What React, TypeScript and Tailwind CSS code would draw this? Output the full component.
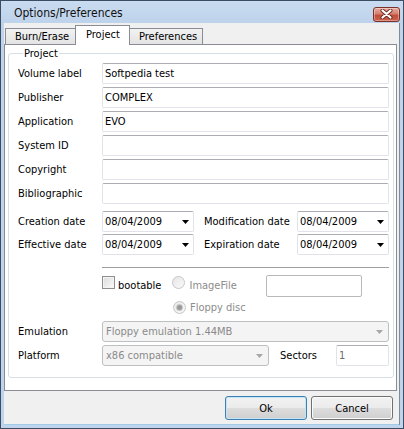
import type { ReactNode } from "react";

const FONT = "font-['Tahoma','DejaVu_Sans_Condensed','DejaVu_Sans',sans-serif]";

function TextBox({ value = "", w = "w-[287px]", disabled = false }: { value?: string; w?: string; disabled?: boolean }) {
  return (
    <div className={`${w} flex h-[21px] items-center rounded-[2px] border border-[#e2e3ea] border-t-[#abadb3] bg-white pl-[2px] ${disabled ? "text-[#6d6d6d]" : "text-black"}`}>
      {value}
    </div>
  );
}

function Arrow({ color }: { color: string }) {
  return (
    <svg width="7" height="4" viewBox="0 0 7 4" className="flex-none">
      <path d="M0 0h7L3.5 4z" fill={color} />
    </svg>
  );
}

function DateBox({ value }: { value: string }) {
  return (
    <div className="flex h-[21px] w-[92px] items-center justify-between rounded-[2px] border border-[#e2e3ea] border-t-[#abadb3] bg-white pl-[2px] pr-[4px]">
      <span>{value}</span>
      <Arrow color="#000" />
    </div>
  );
}

function DisabledCombo({ value, w }: { value: string; w: string }) {
  return (
    <div className={`${w} flex h-[21px] items-center justify-between rounded-[3px] border border-[#bcc0c3] bg-[#f4f4f4] pl-[3px] pr-[5px] text-[#8a8a8a]`}>
      <span>{value}</span>
      <Arrow color="#a7a7a7" />
    </div>
  );
}

function Row({ label, children, className = "" }: { label: string; children: ReactNode; className?: string }) {
  return (
    <div className={`flex items-center ${className}`}>
      <span className="w-[84px] flex-none">{label}</span>
      {children}
    </div>
  );
}

function Radio({ checked }: { checked?: boolean }) {
  return (
    <span className="grid h-[13px] w-[13px] flex-none place-items-center rounded-full border border-[#c6c6c6] bg-gradient-to-br from-[#e6e6e6] to-[#fafafa]">
      {checked && <span className="h-[5px] w-[5px] rounded-full bg-[#9a9a9a] shadow-[0_0_0_1px_#c9c9c9]" />}
    </span>
  );
}

function Tab({ label, active, className = "" }: { label: string; active?: boolean; className?: string }) {
  return (
    <div
      className={`flex items-center border border-b-0 border-[#898c95] ${
        active ? "relative z-10 -mb-px h-[20px] bg-white" : "h-[16px] bg-gradient-to-b from-[#f2f2f2] to-[#e3e3e3]"
      } ${className}`}
    >
      {label}
    </div>
  );
}

function Button({ label, focused }: { label: string; focused?: boolean }) {
  return (
    <button
      type="button"
      className={`relative h-[24px] w-[82px] overflow-hidden rounded-[3px] border ${
        focused ? "border-[#3c7fb1] shadow-[inset_0_0_0_1px_#c2e5f8]" : "border-[#707070] shadow-[inset_0_0_0_1px_#fbfbfb]"
      } bg-[linear-gradient(#f2f2f2_0%,#ebebeb_50%,#dddddd_50%,#cfcfcf_100%)] text-black`}
    >
      {label}
    </button>
  );
}

export default function App() {
  return (
    <div className={`flex h-[429px] w-[404px] flex-col border border-[#3d4d61] bg-[#bfd4ec] text-[11px] leading-none text-black ${FONT}`}>
      <div className="flex h-[22px] flex-none items-center bg-gradient-to-b from-[#c9dbf0] to-[#bdd3eb] pl-[13px] pr-[3px]">
        <span className="pt-[2px] text-[12px] text-[#111]">Options/Preferences</span>
        <div className="ml-auto mt-[4px] grid h-[15px] w-[27px] place-items-center rounded-[3px] border border-[#7b3128] bg-[linear-gradient(#e8aa9c_0%,#d6806f_45%,#c24f3c_55%,#c9604b_100%)] shadow-[inset_0_0_0_1px_rgba(255,255,255,0.35)]">
          <svg width="13" height="10" viewBox="0 0 13 10">
            <path d="M2.5 1.5l8 7M10.5 1.5l-8 7" stroke="#6a2a22" strokeWidth="4" strokeLinecap="round" />
            <path d="M2.5 1.5l8 7M10.5 1.5l-8 7" stroke="#fff" strokeWidth="2.2" strokeLinecap="round" />
          </svg>
        </div>
      </div>

      <div className="mx-[3px] mb-[3px] flex flex-1 flex-col bg-[#f0f0f0] shadow-[inset_-1px_0_0_#7d8b9b,inset_0_-1px_0_#9fcde8]">
        <div className="mt-[1px] flex h-[20px] items-end pl-[1px]">
          <Tab label="Burn/Erase" className="w-[71px] pl-[9px]" />
          <Tab label="Project" active className="-ml-px w-[55px] pl-[10px] pb-[2px]" />
          <Tab label="Preferences" className="-ml-px w-[74px] pl-[9px]" />
        </div>

        <div className="h-[347px] w-[393px] border border-[#898c95] bg-white pl-[3px] pt-[3px]">
          <fieldset className="w-[386px] rounded-[3px] border border-[#d5dfe5] pb-[11px] pl-[9px] pr-[4px] pt-[4px]">
            <legend className="ml-[5px] px-[1px]">Project</legend>
            <div className="flex flex-col">
              <div className="flex flex-col gap-[3px]">
                <Row label="Volume label"><TextBox value="Softpedia test" /></Row>
                <Row label="Publisher"><TextBox value="COMPLEX" /></Row>
                <Row label="Application"><TextBox value="EVO" /></Row>
                <Row label="System ID"><TextBox /></Row>
                <Row label="Copyright"><TextBox /></Row>
                <Row label="Bibliographic"><TextBox /></Row>
              </div>

              <Row label="Creation date" className="mt-[7px]">
                <DateBox value="08/04/2009" />
                <span className="ml-[10px] w-[93px]">Modification date</span>
                <DateBox value="08/04/2009" />
              </Row>
              <Row label="Effective date" className="mt-[2px]">
                <DateBox value="08/04/2009" />
                <span className="ml-[10px] w-[93px]">Expiration date</span>
                <DateBox value="08/04/2009" />
              </Row>

              <div className="ml-[84px] mt-[12px] w-[287px] border-t border-[#a0a0a0] border-b border-b-white" />

              <div className="ml-[84px] mt-[6px] flex items-start">
                <span className="mt-[1px] h-[13px] w-[13px] flex-none border border-[#8e8f8f] bg-gradient-to-br from-[#dcdcdc] to-[#fbfbfb] shadow-[inset_0_0_0_1px_#f4f4f4]" />
                <span className="ml-[3px] mt-[5px]">bootable</span>
                <span className="ml-[11px] mt-[1px]"><Radio /></span>
                <span className="ml-[4px] mt-[5px] w-[77px] text-[#8d8d8d]">ImageFile</span>
                <div className="h-[22px] w-[96px] rounded-[2px] border border-[#b9b9b9] bg-white" />
              </div>
              <div className="ml-[155px] mt-[4px] flex items-center">
                <Radio checked />
                <span className="ml-[4px] text-[#8d8d8d]">Floppy disc</span>
              </div>

              <Row label="Emulation" className="mt-[7px]">
                <DisabledCombo value="Floppy emulation 1.44MB" w="w-[287px]" />
              </Row>
              <Row label="Platform" className="mt-[3px]">
                <DisabledCombo value="x86 compatible" w="w-[167px]" />
                <span className="ml-[11px] w-[56px]">Sectors</span>
                <TextBox value="1" w="w-[53px]" disabled />
              </Row>
            </div>
          </fieldset>
        </div>

        <div className="flex flex-1 items-center justify-end gap-[4px] pr-[7px]">
          <Button label="Ok" focused />
          <Button label="Cancel" />
        </div>
      </div>
    </div>
  );
}
